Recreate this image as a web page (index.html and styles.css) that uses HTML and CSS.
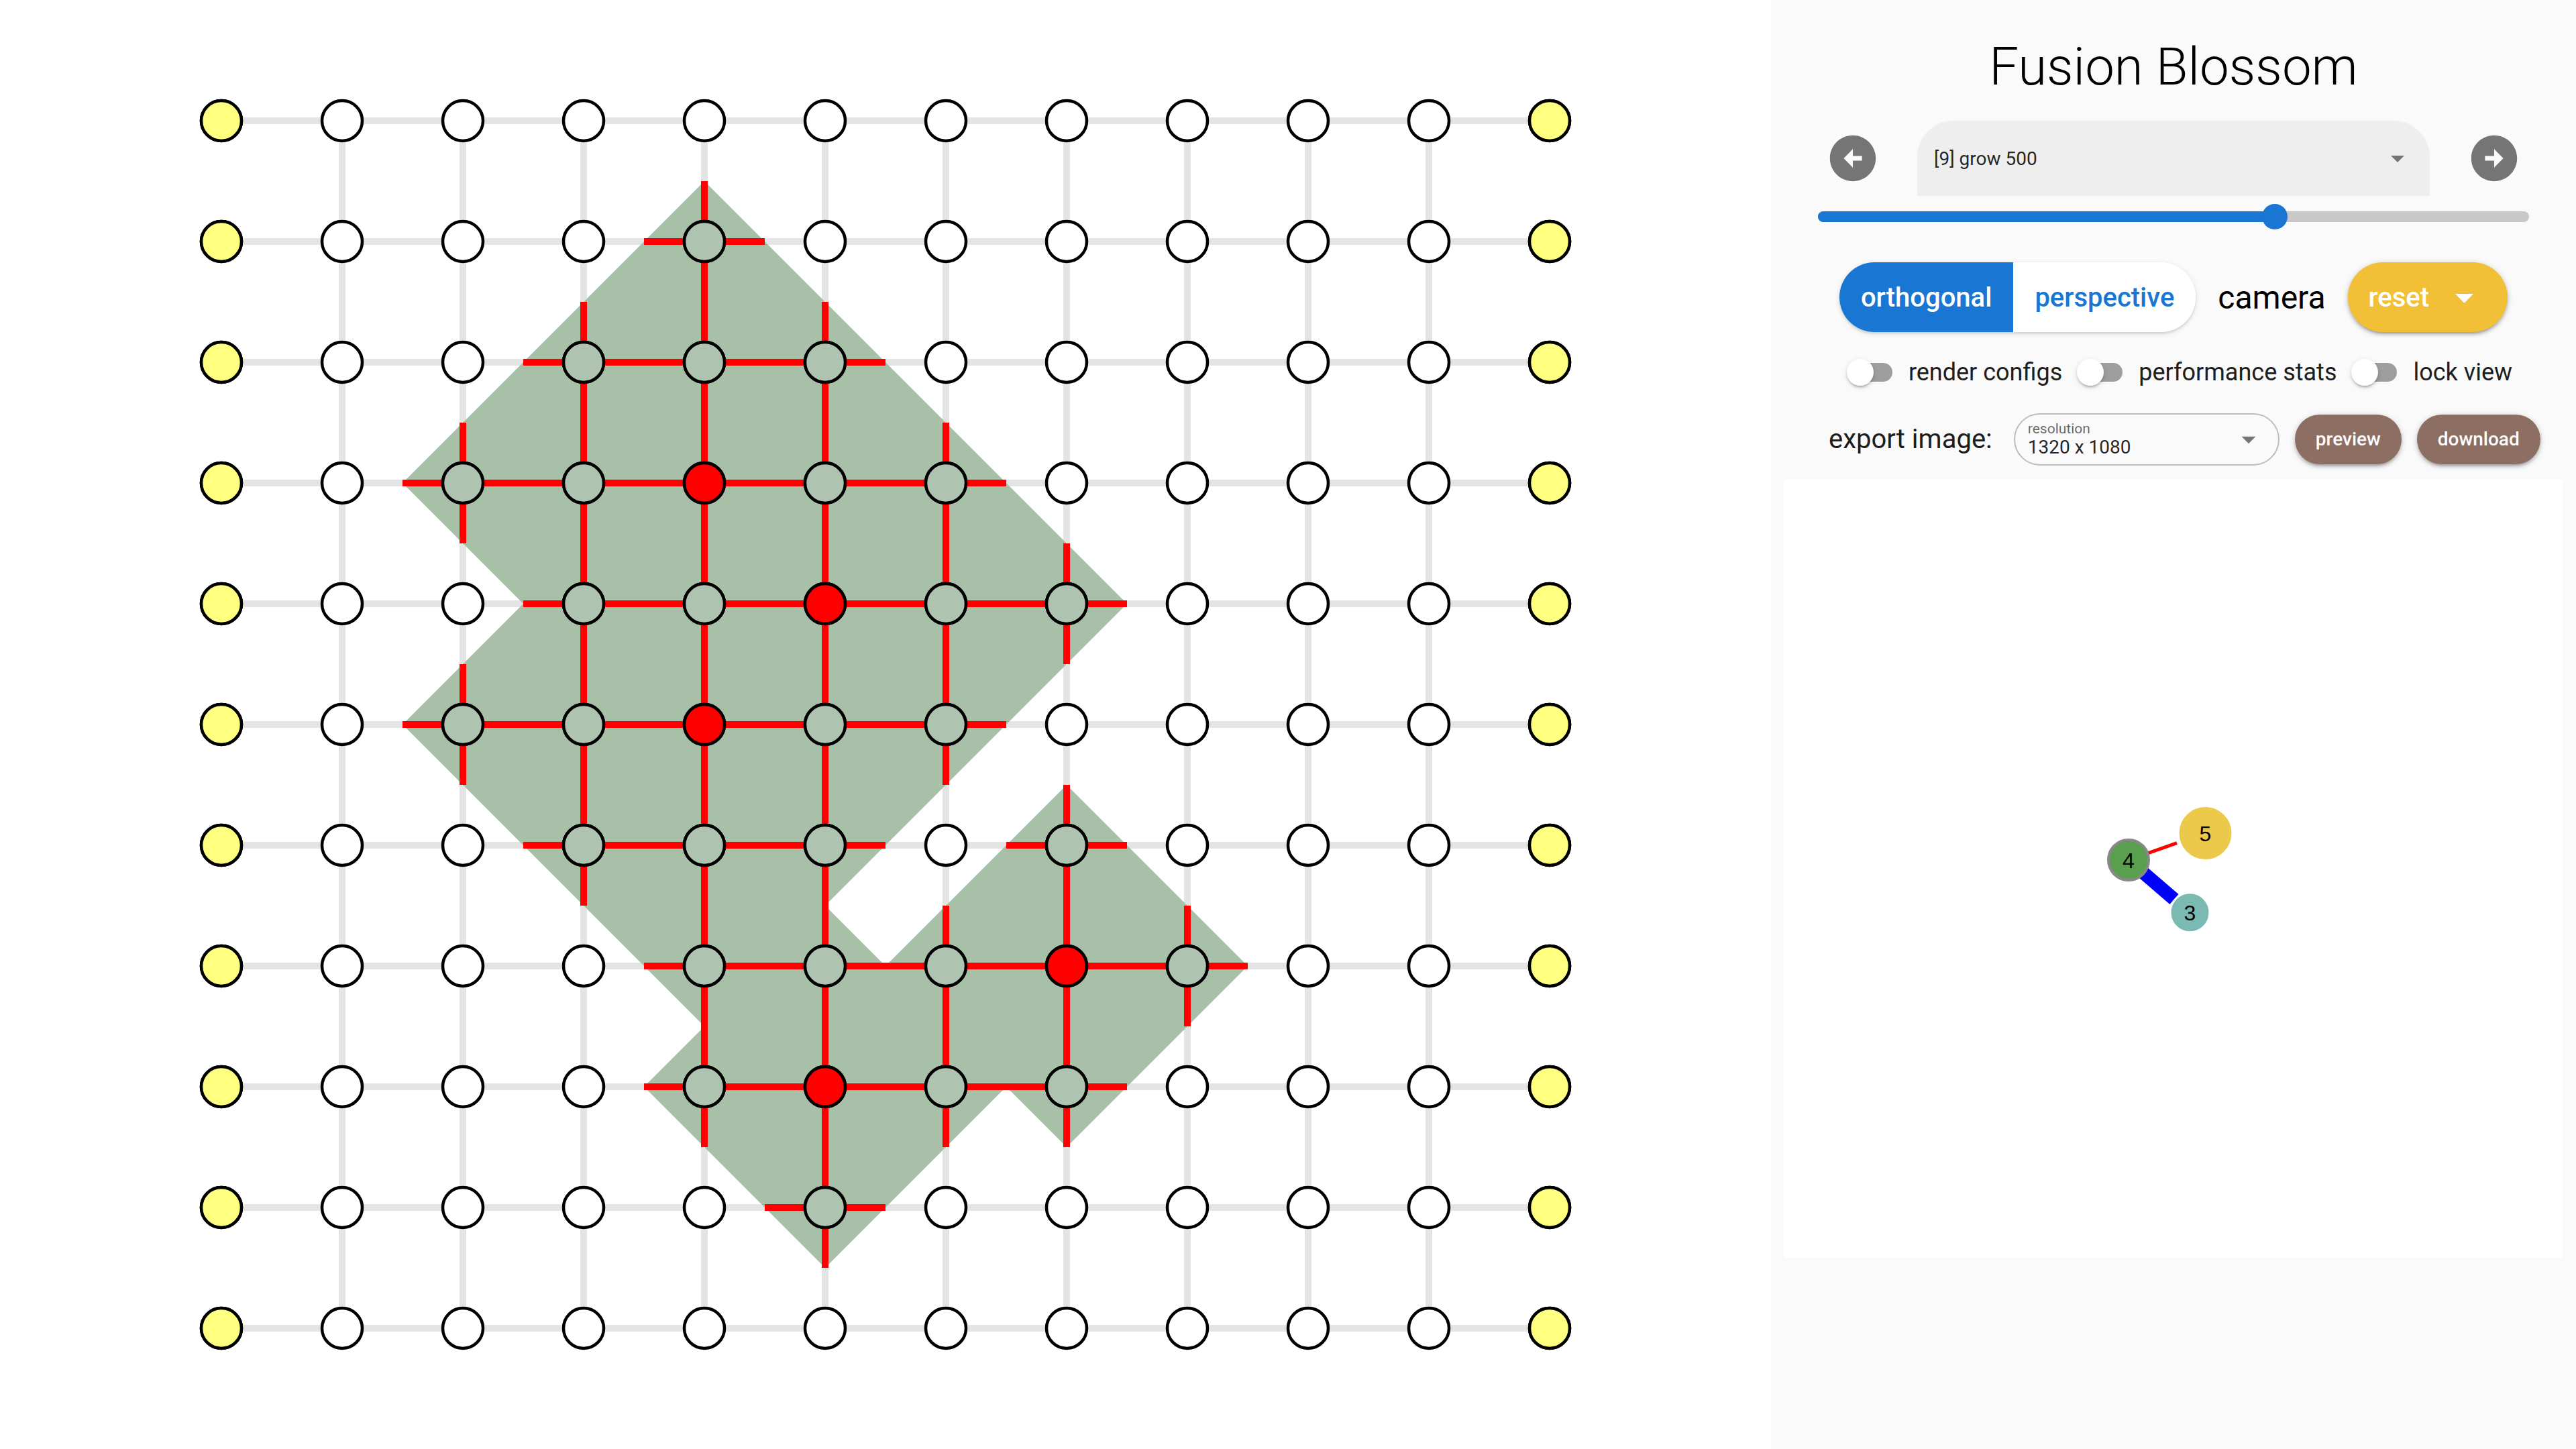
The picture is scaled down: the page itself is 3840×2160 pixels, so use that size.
FILE: index.html
```html
<!DOCTYPE html>
<html lang="en">
<head>
<meta charset="utf-8">
<title>Fusion Blossom</title>
<link rel="stylesheet" href="styles.css">
</head>
<body>
<div class="app">
  <main class="stage">
    <svg class="lattice" width="2640" height="2160" viewBox="0 0 2640 2160">
      <defs>
        <pattern id="node-idle" x="240" y="90" width="180" height="180" patternUnits="userSpaceOnUse">
          <circle class="n n-w" cx="90" cy="90" r="30"/>
        </pattern>
      </defs>
      <path class="edge-idle" d="M330 180H2310M330 360H2310M330 540H2310M330 720H2310M330 900H2310M330 1080H2310M330 1260H2310M330 1440H2310M330 1620H2310M330 1800H2310M330 1980H2310M510 180V1980M690 180V1980M870 180V1980M1050 180V1980M1230 180V1980M1410 180V1980M1590 180V1980M1770 180V1980M1950 180V1980M2130 180V1980"/>
      <path class="dual" d="M1050 270L1500 720L1050 1170L600 720ZM1230 450L1680 900L1230 1350L780 900ZM1050 630L1500 1080L1050 1530L600 1080ZM1590 1170L1860 1440L1590 1710L1320 1440ZM1230 1350L1500 1620L1230 1890L960 1620Z"/>
      <path class="edge-tight" d="M960 360H1140M780 540H1320M600 720H1500M780 900H1680M600 1080H1500M780 1260H1320M1500 1260H1680M960 1440H1860M960 1620H1680M1140 1800H1320M690 630V810M690 990V1170M870 450V1350M1050 270V1710M1230 450V1890M1410 630V1170M1410 1350V1710M1590 810V990M1590 1170V1710M1770 1350V1530"/>
      <rect x="240" y="90" width="2160" height="1980" fill="url(#node-idle)"/>
      <g class="n n-y">
        <circle cx="330" cy="180" r="30"/><circle cx="330" cy="360" r="30"/><circle cx="330" cy="540" r="30"/><circle cx="330" cy="720" r="30"/><circle cx="330" cy="900" r="30"/><circle cx="330" cy="1080" r="30"/><circle cx="330" cy="1260" r="30"/><circle cx="330" cy="1440" r="30"/><circle cx="330" cy="1620" r="30"/><circle cx="330" cy="1800" r="30"/><circle cx="330" cy="1980" r="30"/>
        <circle cx="2310" cy="180" r="30"/><circle cx="2310" cy="360" r="30"/><circle cx="2310" cy="540" r="30"/><circle cx="2310" cy="720" r="30"/><circle cx="2310" cy="900" r="30"/><circle cx="2310" cy="1080" r="30"/><circle cx="2310" cy="1260" r="30"/><circle cx="2310" cy="1440" r="30"/><circle cx="2310" cy="1620" r="30"/><circle cx="2310" cy="1800" r="30"/><circle cx="2310" cy="1980" r="30"/>
      </g>
      <g class="n n-g">
        <circle cx="1050" cy="360" r="30"/>
        <circle cx="870" cy="540" r="30"/><circle cx="1050" cy="540" r="30"/><circle cx="1230" cy="540" r="30"/>
        <circle cx="690" cy="720" r="30"/><circle cx="870" cy="720" r="30"/><circle cx="1230" cy="720" r="30"/><circle cx="1410" cy="720" r="30"/>
        <circle cx="870" cy="900" r="30"/><circle cx="1050" cy="900" r="30"/><circle cx="1410" cy="900" r="30"/><circle cx="1590" cy="900" r="30"/>
        <circle cx="690" cy="1080" r="30"/><circle cx="870" cy="1080" r="30"/><circle cx="1230" cy="1080" r="30"/><circle cx="1410" cy="1080" r="30"/>
        <circle cx="870" cy="1260" r="30"/><circle cx="1050" cy="1260" r="30"/><circle cx="1230" cy="1260" r="30"/><circle cx="1590" cy="1260" r="30"/>
        <circle cx="1050" cy="1440" r="30"/><circle cx="1230" cy="1440" r="30"/><circle cx="1410" cy="1440" r="30"/><circle cx="1770" cy="1440" r="30"/>
        <circle cx="1050" cy="1620" r="30"/><circle cx="1410" cy="1620" r="30"/><circle cx="1590" cy="1620" r="30"/>
        <circle cx="1230" cy="1800" r="30"/>
      </g>
      <g class="n n-r">
        <circle cx="1050" cy="720" r="30"/><circle cx="1230" cy="900" r="30"/><circle cx="1050" cy="1080" r="30"/><circle cx="1590" cy="1440" r="30"/><circle cx="1230" cy="1620" r="30"/>
      </g>
    </svg>
  </main>

  <aside class="panel">
    <h1 class="title">Fusion Blossom</h1>

    <div class="nav-row">
      <svg class="nav-icon" viewBox="0 0 24 24"><path fill-rule="evenodd" d="M2 12c0 5.52 4.48 10 10 10s10-4.48 10-10S17.52 2 12 2 2 6.48 2 12zm10-1h4v2h-4v3l-4-4 4-4v3z"/></svg>
      <div class="step-select">
        <span class="step-value">[9] grow 500</span>
        <svg class="drop-icon" viewBox="0 0 24 24"><path d="M7 10l5 5 5-5z"/></svg>
      </div>
      <svg class="nav-icon" viewBox="0 0 24 24"><path fill-rule="evenodd" d="M22 12c0-5.52-4.48-10-10-10S2 6.48 2 12s4.48 10 10 10 10-4.48 10-10zm-10 1H8v-2h4V8l4 4-4 4v-3z"/></svg>
    </div>

    <div class="slider">
      <div class="slider-track"><div class="slider-fill" style="width: 64.25%"></div></div>
      <div class="slider-thumb" style="left: calc(64.25% - 19px)"></div>
    </div>

    <div class="camera-row">
      <div class="btn-toggle">
        <span class="seg seg-on">orthogonal</span>
        <span class="seg">perspective</span>
      </div>
      <span class="camera-label">camera</span>
      <div class="reset-btn">
        <span>reset</span>
        <svg class="reset-icon" viewBox="0 0 24 24"><path d="M7 10l5 5 5-5z"/></svg>
      </div>
    </div>

    <div class="toggle-row">
      <div class="toggle"><div class="switch"><div class="switch-track"></div><div class="switch-thumb"></div></div><span class="toggle-label">render configs</span></div>
      <div class="toggle"><div class="switch"><div class="switch-track"></div><div class="switch-thumb"></div></div><span class="toggle-label">performance stats</span></div>
      <div class="toggle"><div class="switch"><div class="switch-track"></div><div class="switch-thumb"></div></div><span class="toggle-label">lock view</span></div>
    </div>

    <div class="export-row">
      <span class="export-label">export image:</span>
      <div class="res-select">
        <div class="res-text">
          <span class="res-caption">resolution</span>
          <span class="res-value">1320 x 1080</span>
        </div>
        <svg class="res-icon" viewBox="0 0 24 24"><path d="M7 10l5 5 5-5z"/></svg>
      </div>
      <span class="brown-btn">preview</span>
      <span class="brown-btn">download</span>
    </div>

    <div class="canvas">
      <svg class="graph" width="1161" height="1160" viewBox="0 0 1161 1160">
        <line class="g-edge-red" x1="514" y1="567" x2="586" y2="541.7"/>
        <line class="g-edge-blue" x1="514" y1="567" x2="582" y2="625.5"/>
        <circle class="g-node g5" cx="628.5" cy="527" r="40.5"/>
        <circle class="g-node g4" cx="514" cy="567" r="30"/>
        <circle class="g-node g3" cx="605.5" cy="645.3" r="29.5"/>
        <text class="g-label" x="628.5" y="538.5">5</text>
        <text class="g-label" x="514" y="578.5">4</text>
        <text class="g-label" x="605.5" y="656.8">3</text>
      </svg>
    </div>
  </aside>
</div>
</body>
</html>
```

FILE: styles.css
```css
* { box-sizing: border-box; }

html, body {
  margin: 0;
  padding: 0;
}

body {
  width: 3840px;
  height: 2160px;
  overflow: hidden;
  font-family: Roboto, "Liberation Sans", sans-serif;
  color: #000;
  background: #fff;
}

.app {
  display: flex;
  width: 3840px;
  height: 2160px;
}

/* ---------- left lattice ---------- */
.stage {
  flex: none;
  width: 2640px;
  height: 2160px;
  background: #fff;
}

.lattice { display: block; }

.edge-idle {
  fill: none;
  stroke: #e4e4e4;
  stroke-width: 10;
}

.dual { fill: #a8bfa8; }

.edge-tight {
  fill: none;
  stroke: #ff0000;
  stroke-width: 10;
}

.n {
  stroke: #000;
  stroke-width: 4.5;
}
.n-w { fill: #fff; }
.n-y { fill: #ffff80; }
.n-g { fill: #afc4b0; }
.n-r { fill: #ff0000; }

/* ---------- right panel ---------- */
.panel {
  flex: none;
  width: 1200px;
  height: 2160px;
  background: #fafafa;
  display: flex;
  flex-direction: column;
}

.title {
  margin: 61px 0 0;
  font-size: 78px;
  line-height: 78px;
  font-weight: 300;
  text-align: center;
  color: #000;
}

.nav-row {
  margin-top: 41px;
  height: 112px;
  display: flex;
  justify-content: center;
  align-items: center;
  gap: 55px;
}

.nav-icon {
  width: 82px;
  height: 82px;
  fill: #757575;
  flex: none;
}

.step-select {
  width: 764px;
  height: 112px;
  background: #eeeeee;
  border-radius: 54px 54px 0 0;
  display: flex;
  align-items: center;
  justify-content: space-between;
  padding: 0 24px 0 25px;
}

.step-value {
  font-size: 28px;
  color: rgba(0, 0, 0, 0.87);
}

.drop-icon {
  width: 48px;
  height: 48px;
  fill: #757575;
}

.slider {
  position: relative;
  margin: 12px 70px 0;
  height: 38px;
}

.slider-track {
  margin-top: 11px;
  height: 16px;
  border-radius: 8px;
  background: #c8c8c8;
  overflow: hidden;
}

.slider-fill {
  height: 100%;
  background: #1976d2;
}

.slider-thumb {
  position: absolute;
  top: 0;
  width: 38px;
  height: 38px;
  border-radius: 50%;
  background: #1976d2;
}

.camera-row {
  margin-top: 49px;
  height: 104px;
  display: flex;
  justify-content: center;
  align-items: center;
  gap: 33px;
}

.btn-toggle {
  display: flex;
  height: 104px;
  border-radius: 52px;
  overflow: hidden;
  background: #fff;
  box-shadow: 0 2px 8px rgba(0, 0, 0, 0.12), 0 3px 3px rgba(0, 0, 0, 0.08);
}

.seg {
  display: flex;
  align-items: center;
  padding: 0 32px;
  font-size: 40px;
  font-weight: 500;
  color: #1976d2;
  background: #fff;
}

.seg-on {
  color: #fff;
  background: #1976d2;
}

.camera-label {
  font-size: 48px;
  color: #000;
}

.reset-btn {
  display: flex;
  align-items: center;
  gap: 20px;
  height: 104px;
  padding: 0 32px 0 31px;
  border-radius: 52px;
  background: #f2c037;
  color: #fff;
  font-size: 40px;
  font-weight: 500;
  box-shadow: 0 2px 10px rgba(0, 0, 0, 0.2), 0 4px 4px rgba(0, 0, 0, 0.14), 0 6px 2px -4px rgba(0, 0, 0, 0.12);
}

.reset-icon {
  width: 65px;
  height: 65px;
  fill: #fff;
}

.toggle-row {
  margin-top: 40px;
  height: 40px;
  display: flex;
  justify-content: center;
  align-items: center;
  gap: 22px;
  padding-left: 18px;
}

.toggle {
  display: flex;
  align-items: center;
  gap: 24px;
}

.switch {
  position: relative;
  width: 68px;
  height: 40px;
  flex: none;
}

.switch-track {
  margin: 6px 0 0 6px;
  width: 62px;
  height: 28px;
  border-radius: 14px;
  background: #9e9e9e;
}

.switch-thumb {
  position: absolute;
  left: 0;
  top: 0;
  width: 40px;
  height: 40px;
  border-radius: 50%;
  background: #fff;
  box-shadow: 0 4px 2px -3px rgba(0, 0, 0, 0.2), 0 3px 3px rgba(0, 0, 0, 0.14), 0 2px 8px rgba(0, 0, 0, 0.12);
}

.toggle-label {
  font-size: 36px;
  color: #1d1d1d;
  white-space: nowrap;
}

.export-row {
  margin-top: 40px;
  height: 79px;
  display: flex;
  align-items: center;
  gap: 23px;
  padding-left: 86px;
}

.export-label {
  font-size: 40px;
  color: #1d1d1d;
  margin-right: 9px;
  white-space: nowrap;
}

.res-select {
  width: 396px;
  height: 78px;
  border: 2px solid #bdbdbd;
  border-radius: 39px;
  display: flex;
  align-items: center;
  justify-content: space-between;
  padding: 0 19px 0 19px;
}

.res-text {
  display: flex;
  flex-direction: column;
}

.res-caption {
  font-size: 21px;
  line-height: 24px;
  color: rgba(0, 0, 0, 0.6);
}

.res-value {
  font-size: 28px;
  line-height: 31px;
  color: rgba(0, 0, 0, 0.87);
}

.res-icon {
  width: 50px;
  height: 50px;
  fill: #757575;
}

.brown-btn {
  display: flex;
  align-items: center;
  height: 74px;
  padding: 0 31px;
  border-radius: 37px;
  background: #8d6e63;
  color: #fff;
  font-size: 28px;
  font-weight: 500;
  box-shadow: 0 2px 10px rgba(0, 0, 0, 0.2), 0 4px 4px rgba(0, 0, 0, 0.14), 0 6px 2px -4px rgba(0, 0, 0, 0.12);
}

.canvas {
  margin: 21px 20px 0 19px;
  height: 1160px;
  background: #fff;
  border-radius: 4px;
  overflow: hidden;
}

.graph { display: block; }

.g-edge-red {
  stroke: #ff0000;
  stroke-width: 5;
}

.g-edge-blue {
  stroke: #0000ff;
  stroke-width: 20;
}

.g-node { stroke-width: 3; }
.g5 { fill: #ecc94b; stroke: #fff; }
.g4 { fill: #5a9e50; stroke: #888; stroke-width: 4; }
.g3 { fill: #7bbab3; stroke: #fff; }

.g-label {
  font-family: "Liberation Sans", Arial, sans-serif;
  font-size: 32px;
  text-anchor: middle;
  fill: #000;
}
```
